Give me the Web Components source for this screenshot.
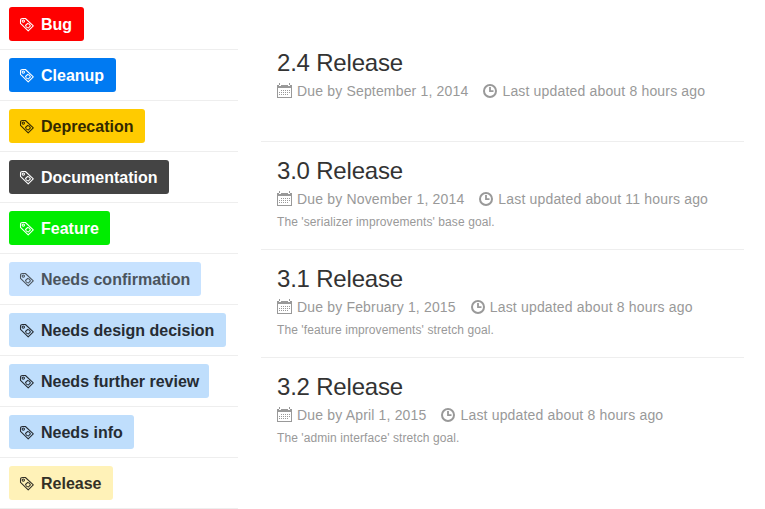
<!DOCTYPE html>
<html lang="en">
<head>
<meta charset="utf-8">
<title>Labels and milestones</title>
<style>
body { margin: 0; background: #fff; font-family: "Liberation Sans", Arial, sans-serif; overflow: hidden; }
</style>
</head>
<body>
<project-overview></project-overview>
<script>
function define(name, html, setup) {
  const template = document.createElement('template');
  template.innerHTML = html;
  customElements.define(name, class extends HTMLElement {
    connectedCallback() {
      if (this.shadowRoot) return;
      this.attachShadow({ mode: 'open' }).append(template.content.cloneNode(true));
      if (setup) setup(this, this.shadowRoot);
    }
  });
}

define('icon-tag', `
<style>:host{display:block;width:16px;height:16px}svg{display:block}</style>
<svg width="16" height="16" viewBox="0 0 16 16" fill="none" stroke="currentColor" stroke-width="1.05" stroke-linejoin="round">
<path d="M1.5 4.4Q1.5 2.5 3.6 2.5H6.4L14.3 9.8 9.2 14.9 1.5 7.4Z"/>
<circle cx="4.3" cy="5.1" r="1.2"/>
<path d="M8.7 7.4Q10.8 7.6 11.4 9.8L9.4 12Q7 11.6 6.5 9.5Z"/>
</svg>`);

define('icon-calendar', `
<style>:host{display:block;width:15px;height:15px}svg{display:block}</style>
<svg width="15" height="15" viewBox="0 0 15 15" fill="currentColor" shape-rendering="crispEdges">
<path d="M0 2H2V3H4V2H11V3H13V2H15V5H0Z"/>
<path d="M0 5h1v10H0zM14 5h1v10h-1zM1 14h13v1H1z"/>
<path d="M2 0h1v2H2zM12 0h1v2h-1z"/>
<path d="M4 7h1v1H4zM6 7h1v1H6zM8 7h1v1H8zM10 7h1v1h-1zM12 7h1v1h-1zM2 9h1v1H2zM4 9h1v1H4zM6 9h1v1H6zM8 9h1v1H8zM10 9h1v1h-1zM12 9h1v1h-1zM2 11h1v1H2zM4 11h1v1H4zM6 11h1v1H6zM8 11h1v1H8zM10 11h1v1h-1z"/>
</svg>`);

define('icon-clock', `
<style>:host{display:block;width:14px;height:14px}svg{display:block}</style>
<svg width="14" height="14" viewBox="0 0 14 14" fill="none" stroke="currentColor" stroke-width="2">
<circle cx="7" cy="7" r="6"/><path d="M7 3V7.2H10.5" stroke-width="1.8"/>
</svg>`);

define('issue-label', `
<style>
:host{display:block;box-sizing:border-box;height:51px;padding:8px 0 0 9px;border-bottom:1px solid #eee}
.pill{display:flex;align-items:center;box-sizing:border-box;height:34px;border-radius:3px;padding-left:10px;gap:6px;font:bold 16px/34px "Liberation Sans",Arial,sans-serif;white-space:nowrap}
span{padding-top:2px;line-height:32px}
</style>
<div class="pill"><icon-tag></icon-tag><span><slot></slot></span></div>`, (el, root) => {
  const pill = root.querySelector('.pill');
  pill.style.background = el.getAttribute('fill');
  pill.style.color = el.getAttribute('ink');
  pill.style.width = el.getAttribute('size') + 'px';
});

define('mile-stone', `
<style>
:host{display:block;box-sizing:border-box;height:108px;padding:14px 16px 0;border-bottom:1px solid #eee;color:#999}
:host(:last-child){border-bottom:0}
h2{margin:0;font-size:24px;line-height:30px;font-weight:400;color:#333;letter-spacing:-.2px}
.meta{display:flex;align-items:center;height:20px;margin-top:3px;font-size:14px;line-height:20px;white-space:nowrap;letter-spacing:.17px}
.due{margin:0 15px 0 5px}.updated{margin-left:5px}
icon-calendar{margin-top:-1px}
p{margin:5px 0 0;font-size:12px;line-height:16px;letter-spacing:.09px}
</style>
<h2><slot></slot></h2>
<div class="meta"><icon-calendar></icon-calendar><span class="due"></span><icon-clock></icon-clock><span class="updated"></span></div>
<p><slot name="goal"></slot></p>`, (el, root) => {
  root.querySelector('.due').textContent = 'Due by ' + el.getAttribute('due');
  root.querySelector('.updated').textContent = 'Last updated about ' + el.getAttribute('updated') + ' hours ago';
});

define('project-overview', `
<style>
:host{display:grid;grid-template-columns:238px 483px;column-gap:23px;height:509px;overflow:hidden}
.labels{margin-top:-1px}
.milestones{padding-top:34px}
</style>
<div class="labels">
<issue-label fill="#ff0000" ink="#fff" size="75">Bug</issue-label>
<issue-label fill="#007af2" ink="#fff" size="107">Cleanup</issue-label>
<issue-label fill="#ffcb00" ink="#332900" size="136">Deprecation</issue-label>
<issue-label fill="#444444" ink="#fff" size="160">Documentation</issue-label>
<issue-label fill="#00ed00" ink="#fff" size="101">Feature</issue-label>
<issue-label fill="#c7e2ff" ink="#4b545d" size="192">Needs confirmation</issue-label>
<issue-label fill="#bfdefc" ink="#262c33" size="217">Needs design decision</issue-label>
<issue-label fill="#bfdefc" ink="#262c33" size="200">Needs further review</issue-label>
<issue-label fill="#bfdefc" ink="#262c33" size="125">Needs info</issue-label>
<issue-label fill="#fff2b8" ink="#333026" size="104">Release</issue-label>
</div>
<div class="milestones">
<mile-stone due="September 1, 2014" updated="8">2.4 Release</mile-stone>
<mile-stone due="November 1, 2014" updated="11">3.0 Release<span slot="goal">The 'serializer improvements' base goal.</span></mile-stone>
<mile-stone due="February 1, 2015" updated="8">3.1 Release<span slot="goal">The 'feature improvements' stretch goal.</span></mile-stone>
<mile-stone due="April 1, 2015" updated="8">3.2 Release<span slot="goal">The 'admin interface' stretch goal.</span></mile-stone>
</div>`);
</script>
</body>
</html>
